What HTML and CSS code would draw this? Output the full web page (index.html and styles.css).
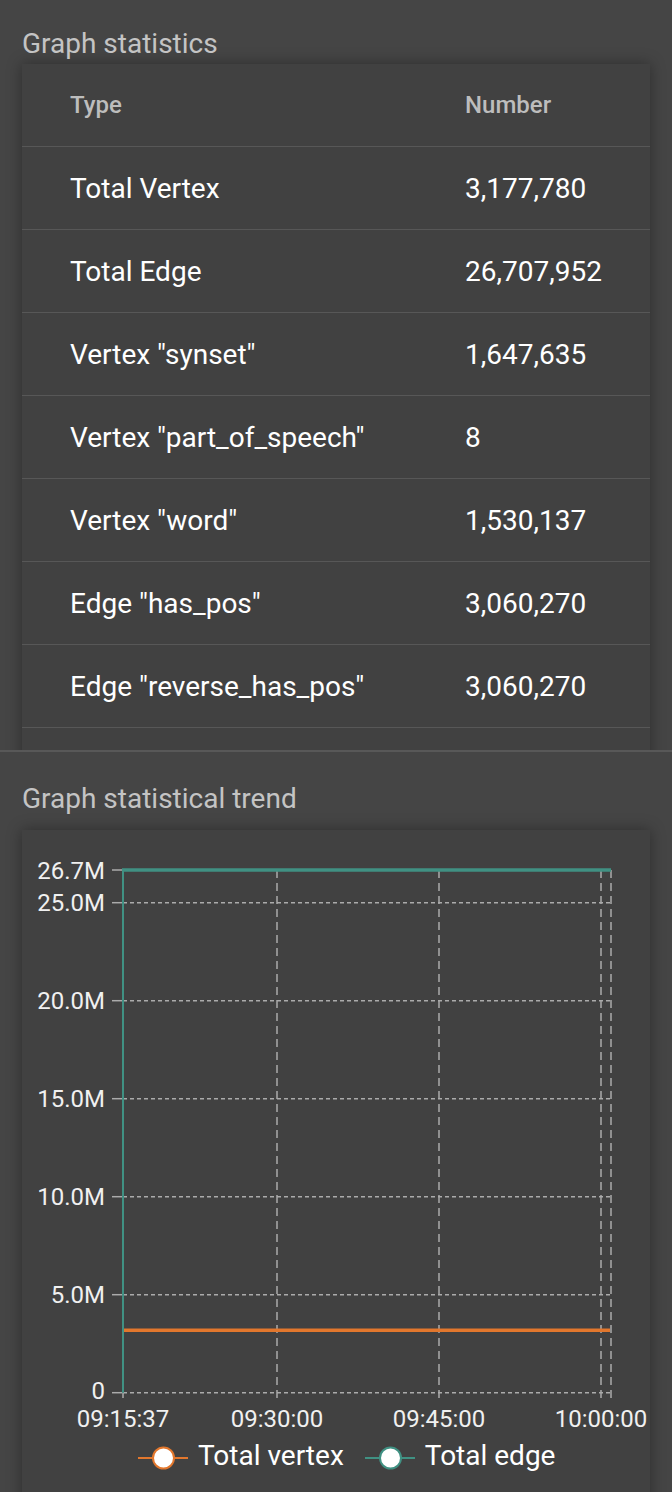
FILE: index.html
```html
<!DOCTYPE html>
<html lang="en">
<head>
<meta charset="utf-8">
<title>Graph statistics</title>
<link rel="stylesheet" href="styles.css">
</head>
<body>
<section class="stats">
  <h2 class="section-title">Graph statistics</h2>
  <div class="card">
    <div class="row head"><span>Type</span><span>Number</span></div>
    <div class="row"><span>Total Vertex</span><span>3,177,780</span></div>
    <div class="row"><span>Total Edge</span><span>26,707,952</span></div>
    <div class="row"><span>Vertex "synset"</span><span>1,647,635</span></div>
    <div class="row"><span>Vertex "part_of_speech"</span><span>8</span></div>
    <div class="row"><span>Vertex "word"</span><span>1,530,137</span></div>
    <div class="row"><span>Edge "has_pos"</span><span>3,060,270</span></div>
    <div class="row"><span>Edge "reverse_has_pos"</span><span>3,060,270</span></div>
    <div class="row"><span></span><span></span></div>
  </div>
</section>
<section class="trend">
  <h2 class="section-title title-trend">Graph statistical trend</h2>
  <div class="card chart-card">
    <svg class="chart" width="628" height="605" viewBox="0 0 628 605">
      <g class="grid-h">
        <line x1="101" y1="562.7" x2="589" y2="562.7"/>
        <line x1="101" y1="464.7" x2="589" y2="464.7"/>
        <line x1="101" y1="366.7" x2="589" y2="366.7"/>
        <line x1="101" y1="268.7" x2="589" y2="268.7"/>
        <line x1="101" y1="170.7" x2="589" y2="170.7"/>
        <line x1="101" y1="72.7" x2="589" y2="72.7"/>
      </g>
      <g class="grid-v">
        <line x1="101" y1="40" x2="101" y2="571"/>
        <line x1="255" y1="40" x2="255" y2="571"/>
        <line x1="417" y1="40" x2="417" y2="571"/>
        <line x1="579" y1="40" x2="579" y2="571"/>
        <line x1="589" y1="40" x2="589" y2="571"/>
      </g>
      <g class="ticks">
        <line x1="90" y1="562.7" x2="100" y2="562.7"/>
        <line x1="90" y1="464.7" x2="100" y2="464.7"/>
        <line x1="90" y1="366.7" x2="100" y2="366.7"/>
        <line x1="90" y1="268.7" x2="100" y2="268.7"/>
        <line x1="90" y1="170.7" x2="100" y2="170.7"/>
        <line x1="90" y1="72.7" x2="100" y2="72.7"/>
        <line x1="90" y1="40" x2="100" y2="40"/>
      </g>
      <g class="ylabels">
        <text x="83" y="48.5">26.7M</text>
        <text x="83" y="81.2">25.0M</text>
        <text x="83" y="179.2">20.0M</text>
        <text x="83" y="277.2">15.0M</text>
        <text x="83" y="375.2">10.0M</text>
        <text x="83" y="473.2">5.0M</text>
        <text x="83" y="569">0</text>
      </g>
      <g class="xlabels">
        <text x="101" y="596.5">09:15:37</text>
        <text x="255" y="596.5">09:30:00</text>
        <text x="417" y="596.5">09:45:00</text>
        <text x="579" y="596.5">10:00:00</text>
      </g>
      <line class="s-vertex" x1="102" y1="500.3" x2="588" y2="500.3"/>
      <line class="s-edge-v" x1="101" y1="562.7" x2="101" y2="40"/>
      <line class="s-edge-h" x1="100" y1="40" x2="589" y2="40"/>
    </svg>
    <div class="legend">
      <div class="legend-item">
        <svg class="legend-icon" width="50" height="24" viewBox="0 0 50 24">
          <line x1="0" y1="12" x2="50" y2="12" class="li-vertex"/>
          <circle cx="25.5" cy="12" r="10.5" class="lc-vertex"/>
        </svg>
        <span>Total vertex</span>
      </div>
      <div class="legend-item">
        <svg class="legend-icon" width="50" height="24" viewBox="0 0 50 24">
          <line x1="0" y1="12" x2="50" y2="12" class="li-edge"/>
          <circle cx="25.5" cy="12" r="10.5" class="lc-edge"/>
        </svg>
        <span>Total edge</span>
      </div>
    </div>
  </div>
</section>
</body>
</html>
```

FILE: styles.css
```css
html, body {
  margin: 0;
  padding: 0;
}

body {
  background: #454545;
  font-family: Roboto, "Noto Sans", "Liberation Sans", sans-serif;
  overflow: hidden;
}

.stats {
  box-sizing: border-box;
  height: 752px;
  padding-top: 28px;
  overflow: hidden;
  border-bottom: 2px solid #585858;
}

.section-title {
  margin: 0 0 4px 22px;
  font-size: 28px;
  line-height: 32px;
  font-weight: 400;
  color: #c4c4c4;
}

.title-trend {
  margin-bottom: 15px;
}

.trend {
  padding-top: 31px;
}

.card {
  margin: 0 22px;
  background: #414141;
  box-shadow: 0 0 14px rgba(0, 0, 0, 0.35);
}

.row {
  display: grid;
  grid-template-columns: 395px 1fr;
  align-items: center;
  height: 82px;
  padding-left: 48px;
  border-bottom: 1px solid #575757;
  font-size: 28px;
  color: #ffffff;
}

.row.head {
  font-size: 24px;
  font-weight: 500;
  color: #bdbdbd;
}

.chart-card {
  padding-bottom: 40px;
}

.chart {
  display: block;
}

.grid-h line {
  stroke: #ababab;
  stroke-width: 1.5;
  stroke-dasharray: 4 3;
}

.grid-v line {
  stroke: #ababab;
  stroke-width: 1.5;
  stroke-dasharray: 8 5;
}

.ticks line {
  stroke: #ababab;
  stroke-width: 1.5;
}

.ylabels text {
  font-family: Roboto, "Noto Sans", sans-serif;
  font-size: 24px;
  fill: #f0f0f0;
  text-anchor: end;
}

.xlabels text {
  font-family: Roboto, "Noto Sans", sans-serif;
  font-size: 24px;
  fill: #f0f0f0;
  text-anchor: middle;
}

.s-vertex {
  stroke: #e2772d;
  stroke-width: 3.5;
}

.s-edge-v {
  stroke: #409183;
  stroke-width: 2;
}

.s-edge-h {
  stroke: #409183;
  stroke-width: 3.5;
}

.legend {
  display: flex;
  align-items: center;
  gap: 21px;
  height: 40px;
  padding-left: 116px;
}

.legend-item {
  display: flex;
  align-items: center;
  gap: 10px;
  font-size: 28px;
  color: #ffffff;
}

.legend-icon {
  display: block;
  margin-top: 6px;
}

.li-vertex { stroke: #e2772d; stroke-width: 2; }
.lc-vertex { stroke: #e2772d; stroke-width: 2; fill: #ffffff; }
.li-edge { stroke: #409183; stroke-width: 2; }
.lc-edge { stroke: #409183; stroke-width: 2; fill: #ffffff; }
```
